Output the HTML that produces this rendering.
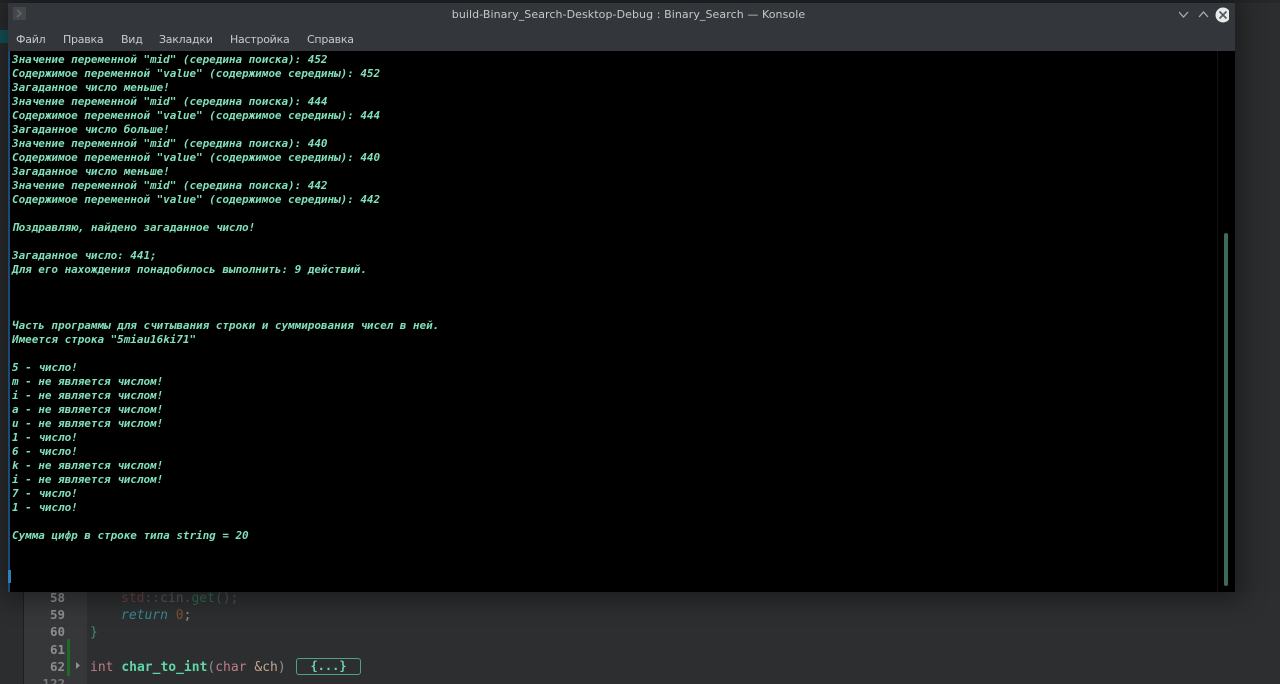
<!DOCTYPE html>
<html lang="ru"><head><meta charset="utf-8"><title>Konsole</title>
<style>
html,body{margin:0;padding:0;width:1280px;height:684px;overflow:hidden;background:#2b2d2e;}
body{position:relative;font-family:"DejaVu Sans","Liberation Sans",sans-serif;}
#all{position:absolute;left:0;top:0;width:1280px;height:684px;filter:blur(.35px);}
.abs{position:absolute;}
#win{left:8px;top:3px;width:1227px;height:589px;background:#000;box-shadow:0 0 22px 8px rgba(0,0,0,.35);}
#bar{left:0;top:0;width:1227px;height:48px;background:#33373b;}
#title{left:11px;top:5px;width:1219px;text-align:center;font-size:11px;letter-spacing:.08px;line-height:14px;color:#c6c8c9;}
.m{top:30px;font-size:11px;letter-spacing:-.25px;line-height:14px;color:#c8cacb;}
#term{left:12px;top:53px;margin:0;font:italic bold 11px/14px "DejaVu Sans Mono","Liberation Mono",monospace;letter-spacing:-.05px;color:#7fe0b9;white-space:pre;}
.code{font:13px/17px "DejaVu Sans Mono","Liberation Mono",monospace;white-space:pre;}
.ln{left:30px;width:35px;text-align:right;font-weight:bold;color:#8b8e8f;font-size:12.5px;}
</style></head><body><div id="all">
<div class="abs" style="left:0;top:0;width:1280px;height:3px;background:#252728"></div>
<div class="abs" style="left:0;top:30px;width:8px;height:13px;background:#13565a"></div>
<div class="abs" style="left:23px;top:592px;width:64px;height:92px;background:#353738;border-left:1px solid #1d1e1f;box-sizing:border-box"></div>
<div class="abs" style="left:87px;top:592px;width:1193px;height:92px;background:#2c2e2f"></div>
<div class="abs" style="left:67px;top:639px;width:3px;height:37px;background:#1f6b25"></div>
<div class="abs code ln" style="top:589px">58</div>
<div class="abs code ln" style="top:606px">59</div>
<div class="abs code ln" style="top:623px">60</div>
<div class="abs code ln" style="top:641px">61</div>
<div class="abs code ln" style="top:658px">62</div>
<div class="abs code ln" style="top:675px;color:#77797a">122</div>
<svg class="abs" style="left:75px;top:661px" width="6" height="9"><path d="M1 1L5 4.5L1 8Z" fill="#8d9091"/></svg>
<div class="abs code" style="left:121px;top:590px;color:#6d3f40">std<span style="color:#4e5152">::</span><span style="color:#555a5b">cin</span><span style="color:#4e5152">.</span><span style="color:#2e6a52">get</span><span style="color:#4d5455">();</span></div>
<div class="abs code" style="left:121px;top:607px;color:#3b8795;font-style:italic">return <span style="font-style:normal;color:#7c5233">0</span><span style="font-style:normal;color:#8b9192">;</span></div>
<div class="abs code" style="left:90px;top:624px;color:#3f8a6d">}</div>
<div class="abs code" style="left:90px;top:659px;color:#b58d90"><span style="color:#bd7c88">int</span> <b style="color:#5ed6a6">char_to_int</b><span style="color:#8b9192">(</span><span style="color:#bd7c88">char</span> <span style="color:#c3a68f">&amp;ch</span><span style="color:#8b9192">)</span></div>
<div class="abs code" style="left:296px;top:658px;width:63px;height:15px;line-height:15px;border:1px solid #4da384;border-radius:3px;text-align:center;color:#6fd4ae;font-weight:bold;font-size:12px">{...}</div>
<div id="win" class="abs">
<div id="bar" class="abs">
<div class="abs" style="left:5px;top:4px;width:13px;height:13px;background:#44484b"></div>
<svg class="abs" style="left:5px;top:4px" width="13" height="13"><path d="M4 3L8 6.5L4 10" fill="none" stroke="#6a6e71" stroke-width="1.2"/></svg>
<div id="title" class="abs">build-Binary_Search-Desktop-Debug : Binary_Search — Konsole</div>
<div class="abs m" style="left:8px">Файл</div>
<div class="abs m" style="left:55px">Правка</div>
<div class="abs m" style="left:113px">Вид</div>
<div class="abs m" style="left:151px">Закладки</div>
<div class="abs m" style="left:222px">Настройка</div>
<div class="abs m" style="left:299px">Справка</div>
<svg class="abs" style="left:1171px;top:4px" width="50" height="18">
<path d="M0 5L4.500 10L9 5" fill="none" stroke="#a9acae" stroke-width="1.3"/>
<path d="M20 10L24.500 5L29 10" fill="none" stroke="#a9acae" stroke-width="1.3"/>
<circle cx="44" cy="8" r="7.5" fill="#e8e9e9"/>
<path d="M40.500 4.500L47.500 11.500M47.500 4.500L40.500 11.500" stroke="#53575a" stroke-width="1.6"/>
</svg>
</div>
<div class="abs" style="left:0;top:48px;width:2px;height:541px;background:#1c4a73"></div>
<div class="abs" style="left:0;top:567px;width:3px;height:13px;background:#2f7fb5"></div>
<div class="abs" style="left:1209px;top:48px;width:1px;height:541px;background:#121212"></div>
<div class="abs" style="left:1216px;top:230px;width:4px;height:353px;background:#3c6b5a;border-radius:2px"></div>
</div>
<pre id="term" class="abs">Значение переменной "mid" (середина поиска): 452
Содержимое переменной "value" (содержимое середины): 452
Загаданное число меньше!
Значение переменной "mid" (середина поиска): 444
Содержимое переменной "value" (содержимое середины): 444
Загаданное число больше!
Значение переменной "mid" (середина поиска): 440
Содержимое переменной "value" (содержимое середины): 440
Загаданное число меньше!
Значение переменной "mid" (середина поиска): 442
Содержимое переменной "value" (содержимое середины): 442

Поздравляю, найдено загаданное число!

Загаданное число: 441;
Для его нахождения понадобилось выполнить: 9 действий.



Часть программы для считывания строки и суммирования чисел в ней.
Имеется строка "5miau16ki71"

5 - число!
m - не является числом!
i - не является числом!
a - не является числом!
u - не является числом!
1 - число!
6 - число!
k - не является числом!
i - не является числом!
7 - число!
1 - число!

Сумма цифр в строке типа string = 20</pre>
</div></body></html>
